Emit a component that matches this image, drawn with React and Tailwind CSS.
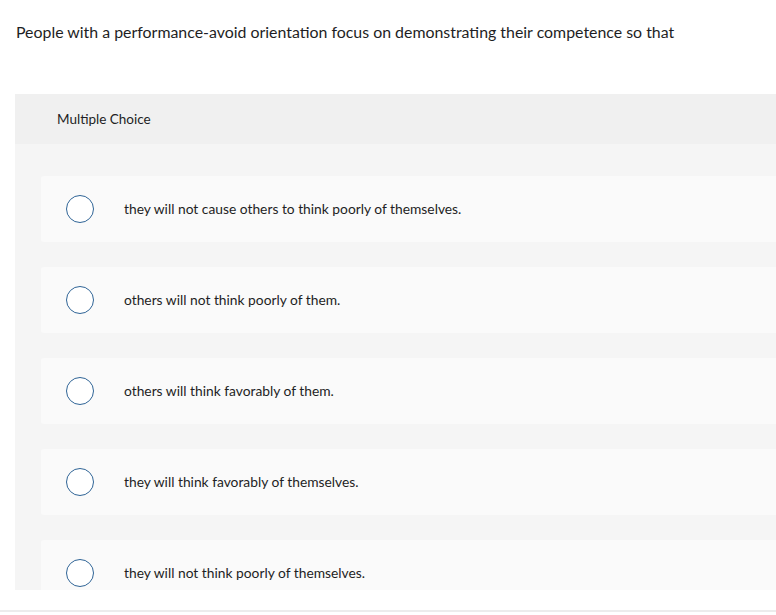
import React from "react";

const options = [
  "they will not cause others to think poorly of themselves.",
  "others will not think poorly of them.",
  "others will think favorably of them.",
  "they will think favorably of themselves.",
  "they will not think poorly of themselves.",
];

export default function App() {
  return (
    <div className="w-[776px] h-[615px] overflow-hidden bg-white text-[#1e1e24] font-['Lato',sans-serif]">
      <p className="pl-4 pt-5 text-[15.9px] leading-6 whitespace-nowrap">
        People with a performance-avoid orientation focus on demonstrating their competence so that
      </p>
      <div className="mt-[50px] ml-[15px] w-[800px]">
        <div className="h-[50px] bg-[#f0f0f0] flex items-center pl-[42px] text-[13.5px]">
          Multiple Choice
        </div>
        <div className="h-[446px] overflow-hidden bg-[#f5f5f5] pt-8 pl-[26px] flex flex-col gap-[25px]">
          {options.map((o) => (
            <div
              key={o}
              className="h-[66px] shrink-0 bg-[#fafafa] rounded-[3px] flex items-center pl-[25px]"
            >
              <span className="w-[28px] h-[28px] shrink-0 rounded-full border-[1.5px] border-[#2f6496] bg-white" />
              <span className="ml-[30px] text-[13.8px] whitespace-nowrap">{o}</span>
            </div>
          ))}
        </div>
      </div>
      <div className="mt-5 h-[2px] bg-[#ececec]" />
    </div>
  );
}
